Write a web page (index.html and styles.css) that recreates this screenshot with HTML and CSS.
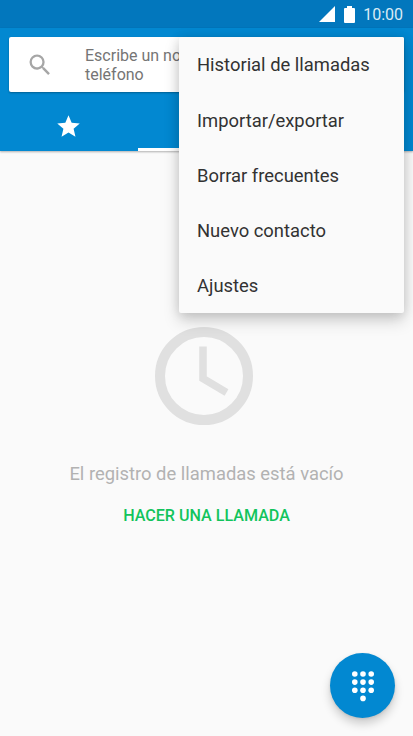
FILE: index.html
```html
<!DOCTYPE html>
<html lang="es">
<head>
<meta charset="utf-8">
<title>Teléfono</title>
<link rel="stylesheet" href="styles.css">
</head>
<body>
<div class="screen">
  <div class="status">
    <svg class="signal" viewBox="0 0 16 16"><path d="M16 0v16H0z"/></svg>
    <svg class="battery" viewBox="0 0 11 17"><path d="M3 0h5v2h2a1 1 0 0 1 1 1v13a1 1 0 0 1-1 1H1a1 1 0 0 1-1-1V3a1 1 0 0 1 1-1h2z"/></svg>
    <span class="time">10:00</span>
  </div>
  <header class="header">
    <div class="search">
      <svg class="search-icon" viewBox="0 0 24 24"><path d="M15.5 14h-.79l-.28-.27A6.47 6.47 0 0 0 16 9.5 6.5 6.5 0 1 0 9.5 16c1.61 0 3.09-.59 4.23-1.57l.27.28v.79l5 4.99L20.49 19l-4.99-5zm-6 0C7.01 14 5 11.99 5 9.5S7.01 5 9.5 5 14 7.01 14 9.5 11.99 14 9.5 14z"/></svg>
      <span class="hint">Escribe un no<br>teléfono</span>
    </div>
    <nav class="tabs">
      <div class="tab"><svg class="star" viewBox="0 0 24 24"><path d="M12 17.27 18.18 21l-1.64-7.03L22 9.24l-7.19-.61L12 2 9.19 8.63 2 9.24l5.46 4.73L5.82 21z"/></svg></div>
      <div class="tab active"></div>
      <div class="tab"></div>
    </nav>
  </header>
  <main class="empty">
    <svg class="clock" viewBox="0 0 98 98"><circle cx="49" cy="49" r="44"/><path d="M48 19.500V51.500L71.500 65.500"/></svg>
    <p class="message">El registro de llamadas está vacío</p>
    <a class="action">HACER UNA LLAMADA</a>
  </main>
  <div class="menu">
    <div class="item">Historial de llamadas</div>
    <div class="item">Importar/exportar</div>
    <div class="item">Borrar frecuentes</div>
    <div class="item">Nuevo contacto</div>
    <div class="item">Ajustes</div>
  </div>
  <div class="fab">
    <svg class="dialpad" viewBox="0 0 24 32"><circle cx="3.800" cy="4" r="2.8"/><circle cx="12" cy="4" r="2.8"/><circle cx="20.200" cy="4" r="2.8"/><circle cx="3.800" cy="12.100" r="2.8"/><circle cx="12" cy="12.100" r="2.8"/><circle cx="20.200" cy="12.100" r="2.8"/><circle cx="3.800" cy="20.200" r="2.8"/><circle cx="12" cy="20.200" r="2.8"/><circle cx="20.200" cy="20.200" r="2.8"/><circle cx="12" cy="28.400" r="2.800"/></svg>
  </div>
</div>
</body>
</html>
```
FILE: styles.css
```css
* { box-sizing: border-box; }
body { margin: 0; font-family: Roboto, "Liberation Sans", sans-serif; }
.screen { position: relative; width: 413px; height: 736px; overflow: hidden; background: #fafafa; display: flex; flex-direction: column; }
.status { height: 28px; flex: none; background: #0277bd; display: flex; align-items: center; justify-content: flex-end; padding-right: 10px; color: #d9ebf5; }
.signal { width: 16px; height: 16px; fill: #fff; margin-right: 9px; }
.battery { width: 11px; height: 17px; fill: #fff; margin-right: 8px; }
.time { font-size: 16px; line-height: 28px; padding-top: 2px; }
.header { height: 122.5px; flex: none; background: #0288d1; padding-top: 9px; box-shadow: 0 1px 2px rgba(0,0,0,.3); }
.search { height: 55px; margin: 0 9px; background: #fff; border-radius: 2px; display: flex; align-items: center; padding-left: 16.5px; box-shadow: 0 1px 2px rgba(0,0,0,.3); }
.search-icon { width: 28px; height: 28px; fill: #a6a6a6; margin-right: 31.5px; }
.hint { font-size: 16px; line-height: 19px; color: #757575; }
.tabs { height: 58.5px; display: grid; grid-template-columns: repeat(3, 1fr); }
.tab { display: flex; align-items: center; justify-content: center; padding-top: 10px; }
.active { border-bottom: 3px solid #fff; }
.star { width: 27px; height: 27px; fill: #fff; }
.empty { display: flex; flex-direction: column; align-items: center; padding-top: 176.5px; }
.clock { width: 98px; height: 98px; margin-right: 5px; fill: none; stroke: #e0e0e0; stroke-width: 10; }
.clock path { stroke-width: 7.5; }
.message { margin: 37px 0 0; font-size: 18.4px; line-height: 24px; color: #b2b2b2; }
.action { margin-top: 19px; font-size: 16.1px; line-height: 22px; font-weight: 500; color: #12c45c; }
.menu { position: absolute; left: 179px; top: 37px; width: 225px; height: 276px; background: #fafafa; border-radius: 2px; display: flex; flex-direction: column; box-shadow: 0 8px 16px rgba(0,0,0,.17), 0 1px 12px rgba(0,0,0,.13); }
.item { flex: 1; display: flex; align-items: center; padding-left: 18px; padding-top: 0.4px; font-size: 18.4px; color: #323232; }
.fab { position: absolute; left: 330px; top: 653px; width: 65px; height: 65px; border-radius: 50%; background: #0288d1; display: flex; align-items: center; justify-content: center; box-shadow: 0 6px 10px rgba(0,0,0,.18), 0 1px 3px rgba(0,0,0,.1); }
.dialpad { width: 24px; height: 32px; fill: #fff; }
```
